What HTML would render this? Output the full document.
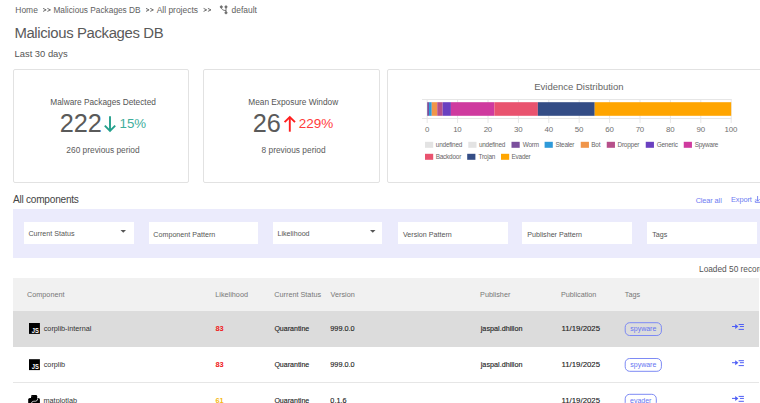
<!DOCTYPE html>
<html><head><meta charset="utf-8"><style>
html,body{margin:0;padding:0;background:#fff;width:760px;height:403px;overflow:hidden;position:relative}
body{font-family:"Liberation Sans", sans-serif}
.t{position:absolute;white-space:nowrap;line-height:1;font-family:"Liberation Sans", sans-serif}
</style></head><body>
<div style="position:absolute;left:13px;top:69px;width:174px;height:112px;border:1px solid #e2e2e2;border-radius:2px;background:#fff"></div><div style="position:absolute;left:203px;top:69px;width:174.5px;height:112px;border:1px solid #e2e2e2;border-radius:2px;background:#fff"></div><div style="position:absolute;left:386.5px;top:69px;width:420px;height:112px;border:1px solid #e2e2e2;border-radius:2px;background:#fff"></div><div style="position:absolute;left:13px;top:208.5px;width:760px;height:49px;background:#ebebfc"></div><div style="position:absolute;left:23.8px;top:221.6px;width:109.8px;height:22.6px;background:#fff"></div><div style="position:absolute;left:148.5px;top:221.6px;width:109.8px;height:22.6px;background:#fff"></div><div style="position:absolute;left:272.7px;top:221.6px;width:109.8px;height:22.6px;background:#fff"></div><div style="position:absolute;left:397.8px;top:221.6px;width:109.8px;height:22.6px;background:#fff"></div><div style="position:absolute;left:522.4px;top:221.6px;width:109.8px;height:22.6px;background:#fff"></div><div style="position:absolute;left:647px;top:221.6px;width:109.8px;height:22.6px;background:#fff"></div><div style="position:absolute;left:13px;top:277.7px;width:745.5px;height:33.3px;background:#f1f1f1"></div><div style="position:absolute;left:13px;top:311px;width:745.5px;height:35.6px;background:#dcdcdc"></div><div style="position:absolute;left:13px;top:382px;width:745.5px;height:1px;background:#e6e6e6"></div>
<svg style="position:absolute;left:0;top:0" width="760" height="403" viewBox="0 0 760 403"><line x1="422" y1="99.5" x2="731.5" y2="99.5" stroke="#e6e6e6" stroke-width="1"/><line x1="422" y1="118.5" x2="731.5" y2="118.5" stroke="#e6e6e6" stroke-width="1"/><line x1="427.20" y1="99" x2="427.20" y2="123" stroke="#e6e6e6" stroke-width="1"/><line x1="457.60" y1="99" x2="457.60" y2="123" stroke="#e6e6e6" stroke-width="1"/><line x1="488.00" y1="99" x2="488.00" y2="123" stroke="#e6e6e6" stroke-width="1"/><line x1="518.40" y1="99" x2="518.40" y2="123" stroke="#e6e6e6" stroke-width="1"/><line x1="548.80" y1="99" x2="548.80" y2="123" stroke="#e6e6e6" stroke-width="1"/><line x1="579.20" y1="99" x2="579.20" y2="123" stroke="#e6e6e6" stroke-width="1"/><line x1="609.60" y1="99" x2="609.60" y2="123" stroke="#e6e6e6" stroke-width="1"/><line x1="640.00" y1="99" x2="640.00" y2="123" stroke="#e6e6e6" stroke-width="1"/><line x1="670.40" y1="99" x2="670.40" y2="123" stroke="#e6e6e6" stroke-width="1"/><line x1="700.80" y1="99" x2="700.80" y2="123" stroke="#e6e6e6" stroke-width="1"/><line x1="731.20" y1="99" x2="731.20" y2="123" stroke="#e6e6e6" stroke-width="1"/><rect x="427.20" y="102.2" width="1.82" height="13.6" fill="#7b4f9d"/><rect x="429.02" y="102.2" width="2.74" height="13.6" fill="#2e9ad9"/><rect x="431.76" y="102.2" width="5.47" height="13.6" fill="#f0954a"/><rect x="437.23" y="102.2" width="5.47" height="13.6" fill="#b6508a"/><rect x="442.70" y="102.2" width="8.21" height="13.6" fill="#6a40c0"/><rect x="450.91" y="102.2" width="43.47" height="13.6" fill="#cf3a9f"/><rect x="494.38" y="102.2" width="43.47" height="13.6" fill="#e9536f"/><rect x="537.86" y="102.2" width="56.85" height="13.6" fill="#344d86"/><rect x="594.70" y="102.2" width="136.50" height="13.6" fill="#ffa500"/><rect x="425" y="141.8" width="8.2" height="6" fill="#e3e3e3"/><rect x="468.3" y="141.8" width="8.2" height="6" fill="#e3e3e3"/><rect x="511.5" y="141.8" width="8.2" height="6" fill="#7b4f9d"/><rect x="544.6" y="141.8" width="8.2" height="6" fill="#2e9ad9"/><rect x="580.75" y="141.8" width="8.2" height="6" fill="#f0954a"/><rect x="606.75" y="141.8" width="8.2" height="6" fill="#b6508a"/><rect x="645.75" y="141.8" width="8.2" height="6" fill="#6a40c0"/><rect x="683.75" y="141.8" width="8.2" height="6" fill="#cf3a9f"/><rect x="425" y="153.8" width="8.2" height="6" fill="#e9536f"/><rect x="467.2" y="153.8" width="8.2" height="6" fill="#344d86"/><rect x="501" y="153.8" width="8.2" height="6" fill="#ffa500"/><g fill="none" stroke="#23a08c" stroke-width="1.9" stroke-linecap="butt"><path d="M110 116.2V131"/><path d="M104.8 125.6L110 130.8L115.2 125.6"/></g><g fill="none" stroke="#ff1f1f" stroke-width="1.9"><path d="M289.8 131.7V117"/><path d="M284.6 122.2L289.8 117L295 122.2"/></g><path d="M120.5 229.9H126.0L123.25 232.8Z" fill="#555"/><path d="M370 229.9H375.5L372.75 232.8Z" fill="#555"/><g fill="none" stroke="#666" stroke-width="0.95"><path d="M43.099999999999994 8.4L46.199999999999996 9.9L43.099999999999994 11.4"/><path d="M47.4 8.4L50.5 9.9L47.4 11.4"/></g><g fill="none" stroke="#666" stroke-width="0.95"><path d="M146.0 8.4L149.1 9.9L146.0 11.4"/><path d="M150.29999999999998 8.4L153.39999999999998 9.9L150.29999999999998 11.4"/></g><g fill="none" stroke="#666" stroke-width="0.95"><path d="M203.60000000000002 8.4L206.70000000000002 9.9L203.60000000000002 11.4"/><path d="M207.9 8.4L211.0 9.9L207.9 11.4"/></g><g fill="none" stroke="#6a6a6a" stroke-width="0.9"><circle cx="221.3" cy="6.9" r="1.05" fill="#777"/><circle cx="226" cy="6.9" r="1.05" fill="#777"/><circle cx="226" cy="12.8" r="1.05" fill="#777"/><path d="M226 7.5V12"/><path d="M221.3 7.6Q221.6 10.4 226 10.6"/></g><g fill="none" stroke="#6d7bf2" stroke-width="0.9"><path d="M757.6 196V201"/><path d="M755.6 199.2L757.6 201.2L759.6 199.2"/><path d="M755.3 200.6V202.3H761"/></g><rect x="29" y="323" width="10.9" height="10.9" fill="#000"/><text x="31.8" y="332.9" font-family="Liberation Sans" font-weight="bold" font-size="7" fill="#fff" textLength="7.1" lengthAdjust="spacingAndGlyphs">JS</text><rect x="29" y="359.2" width="10.9" height="10.9" fill="#000"/><text x="31.8" y="369.09999999999997" font-family="Liberation Sans" font-weight="bold" font-size="7" fill="#fff" textLength="7.1" lengthAdjust="spacingAndGlyphs">JS</text><g fill="#000"><path d="M31 398V396.3Q31 394.9 32.5 394.9H35.8Q37.2 394.9 37.2 396.3V399.5H31Z"/><path d="M28.2 399.6Q28.2 398 29.8 398H36V405H28.2Z"/><path d="M34 398H38.4Q39.9 398 39.9 399.6V405H34Z"/></g><path d="M31.2 403.5Q31.6 401.4 33.8 401.2H35.8Q37.6 401 37.8 398.3" fill="none" stroke="#fff" stroke-width="0.75"/><circle cx="31.9" cy="396.4" r="0.5" fill="#777"/><rect x="625.2" y="322.7" width="36.2" height="12.8" rx="4.5" fill="none" stroke="#7d8af4" stroke-width="1"/><text x="643.3000000000001" y="331.2" font-family="Liberation Sans" font-size="7" fill="#6675f2" text-anchor="middle">spyware</text><rect x="625.2" y="358.5" width="36.2" height="12.8" rx="4.5" fill="none" stroke="#7d8af4" stroke-width="1"/><text x="643.3000000000001" y="367.0" font-family="Liberation Sans" font-size="7" fill="#6675f2" text-anchor="middle">spyware</text><rect x="625.2" y="394.3" width="31.1" height="12.8" rx="4.5" fill="none" stroke="#7d8af4" stroke-width="1"/><text x="640.75" y="402.8" font-family="Liberation Sans" font-size="7" fill="#6675f2" text-anchor="middle">evader</text><g fill="#4f5ff5"><rect x="732" y="326.0" width="4" height="1"/><path d="M735.2 324.0L738.4 326.5L735.2 329.09999999999997Z"/><rect x="738.6" y="324.0" width="5.3" height="1"/><rect x="739.9" y="326.0" width="4" height="1"/><rect x="738.6" y="328.9" width="5.3" height="1"/></g><g fill="#4f5ff5"><rect x="732" y="362.20000000000005" width="4" height="1"/><path d="M735.2 360.20000000000005L738.4 362.70000000000005L735.2 365.3Z"/><rect x="738.6" y="360.20000000000005" width="5.3" height="1"/><rect x="739.9" y="362.20000000000005" width="4" height="1"/><rect x="738.6" y="365.1" width="5.3" height="1"/></g><g fill="#4f5ff5"><rect x="732" y="397.90000000000003" width="4" height="1"/><path d="M735.2 395.90000000000003L738.4 398.40000000000003L735.2 401.0Z"/><rect x="738.6" y="395.90000000000003" width="5.3" height="1"/><rect x="739.9" y="397.90000000000003" width="4" height="1"/><rect x="738.6" y="400.8" width="5.3" height="1"/></g></svg>
<span class="t" id="s0" style="left:15.32px;top:6.21px;font-size:8.45px;color:#616161;">Home</span><span class="t" id="s1" style="left:53.44px;top:6.22px;font-size:8.3px;color:#616161;">Malicious Packages DB</span><span class="t" id="s2" style="left:156.70px;top:6.21px;font-size:8.45px;color:#616161;">All projects</span><span class="t" id="s3" style="left:231.56px;top:6.21px;font-size:8.45px;color:#616161;">default</span><span class="t" id="s4" style="left:14.41px;top:25.90px;font-size:14.9px;color:#5a5a5a;letter-spacing:-0.36px;">Malicious Packages DB</span><span class="t" id="s5" style="left:14.55px;top:49.31px;font-size:9.4px;color:#555;">Last 30 days</span><span class="t" id="s6" style="left:50.30px;top:98.40px;font-size:8.3px;color:#555;">Malware Packages Detected</span><span class="t" id="s7" style="left:59.63px;top:111.20px;font-size:25.3px;color:#5a5a5a;">222</span><span class="t" id="s8" style="left:119.50px;top:117.41px;font-size:13.3px;color:#3fae9c;">15%</span><span class="t" id="s9" style="left:66.37px;top:145.81px;font-size:8.35px;color:#5c5c5c;">260 previous period</span><span class="t" id="s10" style="left:248.28px;top:98.40px;font-size:8.3px;color:#555;">Mean Exposure Window</span><span class="t" id="s11" style="left:252.74px;top:111.21px;font-size:25.3px;color:#5a5a5a;">26</span><span class="t" id="s12" style="left:298.82px;top:117.40px;font-size:13.5px;color:#ff3b3b;">229%</span><span class="t" id="s13" style="left:261.56px;top:145.81px;font-size:8.35px;color:#5c5c5c;">8 previous period</span><span class="t" id="s14" style="left:534.29px;top:81.71px;font-size:9.5px;color:#666;">Evidence Distribution</span><span class="t" id="s15" style="left:425.01px;top:126.01px;font-size:7.9px;color:#707070;letter-spacing:-0.15px;">0</span><span class="t" id="s16" style="left:453.13px;top:126.01px;font-size:7.9px;color:#707070;letter-spacing:-0.15px;">10</span><span class="t" id="s17" style="left:483.63px;top:126.00px;font-size:7.9px;color:#707070;letter-spacing:-0.15px;">20</span><span class="t" id="s18" style="left:514.09px;top:126.00px;font-size:7.9px;color:#707070;letter-spacing:-0.15px;">30</span><span class="t" id="s19" style="left:544.55px;top:126.00px;font-size:7.9px;color:#707070;letter-spacing:-0.15px;">40</span><span class="t" id="s20" style="left:574.87px;top:126.00px;font-size:7.9px;color:#707070;letter-spacing:-0.15px;">50</span><span class="t" id="s21" style="left:605.23px;top:126.00px;font-size:7.9px;color:#707070;letter-spacing:-0.15px;">60</span><span class="t" id="s22" style="left:635.63px;top:126.00px;font-size:7.9px;color:#707070;letter-spacing:-0.15px;">70</span><span class="t" id="s23" style="left:666.07px;top:126.00px;font-size:7.9px;color:#707070;letter-spacing:-0.15px;">80</span><span class="t" id="s24" style="left:696.45px;top:126.00px;font-size:7.9px;color:#707070;letter-spacing:-0.15px;">90</span><span class="t" id="s25" style="left:724.61px;top:126.00px;font-size:7.9px;color:#707070;letter-spacing:-0.15px;">100</span><span class="t" id="s26" style="left:435.82px;top:141.70px;font-size:6.4px;color:#666;letter-spacing:-0.2px;">undefined</span><span class="t" id="s27" style="left:478.92px;top:141.70px;font-size:6.4px;color:#666;letter-spacing:-0.2px;">undefined</span><span class="t" id="s28" style="left:522.80px;top:141.70px;font-size:6.4px;color:#666;letter-spacing:-0.2px;">Worm</span><span class="t" id="s29" style="left:555.46px;top:141.72px;font-size:6.4px;color:#666;letter-spacing:-0.2px;">Stealer</span><span class="t" id="s30" style="left:591.24px;top:141.72px;font-size:6.4px;color:#666;letter-spacing:-0.2px;">Bot</span><span class="t" id="s31" style="left:617.49px;top:141.72px;font-size:6.4px;color:#666;letter-spacing:-0.2px;">Dropper</span><span class="t" id="s32" style="left:656.68px;top:141.72px;font-size:6.4px;color:#666;letter-spacing:-0.2px;">Generic</span><span class="t" id="s33" style="left:694.71px;top:141.72px;font-size:6.4px;color:#666;letter-spacing:-0.2px;">Spyware</span><span class="t" id="s34" style="left:435.69px;top:153.80px;font-size:6.4px;color:#666;letter-spacing:-0.2px;">Backdoor</span><span class="t" id="s35" style="left:478.47px;top:153.80px;font-size:6.4px;color:#666;letter-spacing:-0.2px;">Trojan</span><span class="t" id="s36" style="left:511.49px;top:153.80px;font-size:6.4px;color:#666;letter-spacing:-0.2px;">Evader</span><span class="t" id="s37" style="left:12.90px;top:194.91px;font-size:10.1px;color:#444;letter-spacing:-0.23px;">All components</span><span class="t" id="s38" style="left:695.63px;top:196.70px;font-size:7.4px;color:#6d7bf2;letter-spacing:-0.12px;">Clear all</span><span class="t" id="s39" style="left:731.01px;top:196.31px;font-size:7.4px;color:#6d7bf2;letter-spacing:-0.1px;">Export</span><span class="t" id="s40" style="left:28.44px;top:230.60px;font-size:7.15px;color:#555;">Current Status</span><span class="t" id="s41" style="left:153.34px;top:232.01px;font-size:7.15px;color:#555;">Component Pattern</span><span class="t" id="s42" style="left:277.43px;top:230.60px;font-size:7.15px;color:#555;">Likelihood</span><span class="t" id="s43" style="left:403.00px;top:232.01px;font-size:7.15px;color:#555;">Version Pattern</span><span class="t" id="s44" style="left:527.23px;top:232.00px;font-size:7.15px;color:#555;">Publisher Pattern</span><span class="t" id="s45" style="left:652.26px;top:232.01px;font-size:7.15px;color:#555;">Tags</span><span class="t" id="s46" style="left:699.04px;top:264.90px;font-size:8.3px;color:#555;">Loaded 50 records</span><span class="t" id="s47" style="left:27.04px;top:291.10px;font-size:7.25px;color:#777;">Component</span><span class="t" id="s48" style="left:215.32px;top:291.10px;font-size:7.25px;color:#777;">Likelihood</span><span class="t" id="s49" style="left:274.34px;top:291.10px;font-size:7.25px;color:#777;">Current Status</span><span class="t" id="s50" style="left:330.60px;top:291.10px;font-size:7.25px;color:#777;">Version</span><span class="t" id="s51" style="left:480.12px;top:291.10px;font-size:7.25px;color:#777;">Publisher</span><span class="t" id="s52" style="left:560.92px;top:291.10px;font-size:7.25px;color:#777;">Publication</span><span class="t" id="s53" style="left:624.86px;top:291.10px;font-size:7.25px;color:#777;">Tags</span><span class="t" id="s54" style="left:43.71px;top:325.21px;font-size:7.28px;color:#333;">corplib-internal</span><span class="t" id="s55" style="left:215.58px;top:325.20px;font-size:7.4px;color:#f01818;font-weight:bold;letter-spacing:-0.1px;">83</span><span class="t" id="s56" style="left:274.38px;top:325.20px;font-size:7.05px;color:#222;-webkit-text-stroke:0.12px #222;">Quarantine</span><span class="t" id="s57" style="left:330.27px;top:325.22px;font-size:7.3px;color:#222;-webkit-text-stroke:0.12px #222;">999.0.0</span><span class="t" id="s58" style="left:480.78px;top:325.21px;font-size:7.22px;color:#222;-webkit-text-stroke:0.12px #222;">jaspal.dhillon</span><span class="t" id="s59" style="left:561.41px;top:325.20px;font-size:7.85px;color:#222;-webkit-text-stroke:0.12px #222;">11/19/2025</span><span class="t" id="s60" style="left:43.71px;top:361.01px;font-size:7.28px;color:#333;">corplib</span><span class="t" id="s61" style="left:215.58px;top:361.00px;font-size:7.4px;color:#f01818;font-weight:bold;letter-spacing:-0.1px;">83</span><span class="t" id="s62" style="left:274.38px;top:361.00px;font-size:7.05px;color:#222;-webkit-text-stroke:0.12px #222;">Quarantine</span><span class="t" id="s63" style="left:330.27px;top:361.01px;font-size:7.3px;color:#222;-webkit-text-stroke:0.12px #222;">999.0.0</span><span class="t" id="s64" style="left:480.78px;top:361.00px;font-size:7.22px;color:#222;-webkit-text-stroke:0.12px #222;">jaspal.dhillon</span><span class="t" id="s65" style="left:561.41px;top:361.00px;font-size:7.85px;color:#222;-webkit-text-stroke:0.12px #222;">11/19/2025</span><span class="t" id="s66" style="left:43.53px;top:396.60px;font-size:7.28px;color:#333;">matplotlab</span><span class="t" id="s67" style="left:215.54px;top:396.61px;font-size:7.4px;color:#f5b915;font-weight:bold;letter-spacing:-0.1px;">61</span><span class="t" id="s68" style="left:274.38px;top:396.61px;font-size:7.05px;color:#222;-webkit-text-stroke:0.12px #222;">Quarantine</span><span class="t" id="s69" style="left:330.34px;top:396.61px;font-size:7.3px;color:#222;-webkit-text-stroke:0.12px #222;">0.1.6</span><span class="t" id="s70" style="left:561.41px;top:396.61px;font-size:7.85px;color:#222;-webkit-text-stroke:0.12px #222;">11/19/2025</span>
</body></html>
